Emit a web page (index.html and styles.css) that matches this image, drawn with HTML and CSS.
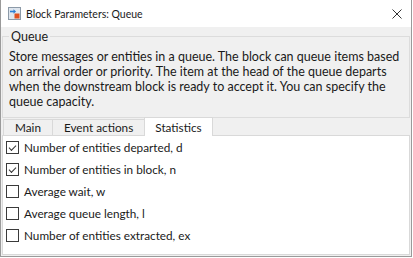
FILE: index.html
```html
<!DOCTYPE html>
<html lang="en">
<head>
  <meta charset="UTF-8">
  <meta name="viewport" content="width=device-width, initial-scale=1.0">
  <title>Block Parameters: Queue</title>
  <link rel="stylesheet" href="styles.css">
</head>
<body>
  <div class="window">
    <!-- Barra de titulo -->
    <div class="titlebar">
      <svg class="app-icon" width="13" height="13" viewBox="0 0 13 13">
        <rect x="0.5" y="0.5" width="12" height="12" fill="#dfe6ee" stroke="#8c9aa8"/>
        <path d="M2 4.5h4" stroke="#2a7fd4" stroke-width="1.6"/>
        <path d="M5.5 2.2l2.6 2.3-2.6 2.3z" fill="#2a7fd4"/>
        <rect x="6.5" y="6.5" width="5" height="5" fill="#e0501e"/>
      </svg>
      <span class="title">Block Parameters: Queue</span>
      <svg class="close" width="10" height="10" viewBox="0 0 10 10">
        <path d="M0.5 0.5l9 9M9.5 0.5l-9 9" stroke="#333" stroke-width="1"/>
      </svg>
    </div>

    <div class="content">
      <!-- Descripcion del bloque -->
      <fieldset class="group">
        <legend>Queue</legend>
        <p class="description">Store messages or entities in a queue. The block can queue items based on arrival order or priority. The item at the head of the queue departs when the downstream block is ready to accept it. You can specify the queue capacity.</p>
      </fieldset>

      <!-- Pestanas -->
      <div class="tabs">
        <div class="tab">Main</div>
        <div class="tab">Event actions</div>
        <div class="tab active">Statistics</div>
      </div>

      <div class="panel">
        <label class="option"><span class="box checked"></span>Number of entities departed, d</label>
        <label class="option"><span class="box checked"></span>Number of entities in block, n</label>
        <label class="option"><span class="box"></span>Average wait, w</label>
        <label class="option"><span class="box"></span>Average queue length, l</label>
        <label class="option"><span class="box"></span>Number of entities extracted, ex</label>
      </div>
    </div>
  </div>
</body>
</html>
```

FILE: styles.css
```css
body {
  margin: 0;
  font-family: Lato, "Liberation Sans", sans-serif;
  font-size: 12.5px;
  color: #1a1a1a;
  background: #ffffff;
}
.window {
  width: 412px;
  height: 257px;
  box-sizing: border-box;
  border: 1px solid #9a9a9a;
  border-top: none;
  background: #f0f0f0;
  display: flex;
  flex-direction: column;
}
.titlebar {
  height: 27px;
  background: #ffffff;
  display: flex;
  align-items: center;
  padding: 0 8px 0 7px;
}
.app-icon {
  margin-right: 5px;
}
.title {
  flex: 1;
  font-size: 10.5px;
  color: #1a1a1a;
  padding-top: 1px;
}
.close {
  margin-right: 1px;
}
.content {
  flex: 1;
  display: flex;
  flex-direction: column;
  padding: 0 1px 1px 1px;
}
.group {
  margin: 0;
  border: 1px solid #dcdcdc;
  padding: 4px 6px 8px 6px;
}
.group legend {
  padding: 2px 2px 0 2px;
  margin-left: 0;
  line-height: 16px;
}
.description {
  margin: 0;
  line-height: 15px;
}
.tabs {
  display: flex;
  align-items: flex-end;
  height: 16px;
  margin-top: 1px;
  padding-left: 1px;
  font-size: 11.75px;
}
.tab {
  height: 15px;
  line-height: 15px;
  padding: 0 11px;
  border: 1px solid #d9d9d9;
  border-bottom: none;
  border-right: none;
  background: #f0f0f0;
}
.tab.active {
  height: 18px;
  line-height: 19px;
  padding: 0 10px;
  background: #ffffff;
  border-right: 1px solid #d9d9d9;
  margin-bottom: -1px;
  position: relative;
}
.panel {
  flex: 1;
  background: #ffffff;
  border: 1px solid #d9d9d9;
  font-size: 11.75px;
}
.option {
  display: flex;
  align-items: center;
  height: 22px;
  padding-left: 3px;
}
.box {
  width: 11px;
  height: 11px;
  border: 1px solid #3a3a3a;
  background: #ffffff;
  margin-right: 5px;
  position: relative;
}
.box.checked::after {
  content: "";
  position: absolute;
  left: 2px;
  top: 1px;
  width: 6px;
  height: 3px;
  border-left: 1px solid #333333;
  border-bottom: 1px solid #333333;
  transform: translate(0, 2px) rotate(-45deg);
}
```
